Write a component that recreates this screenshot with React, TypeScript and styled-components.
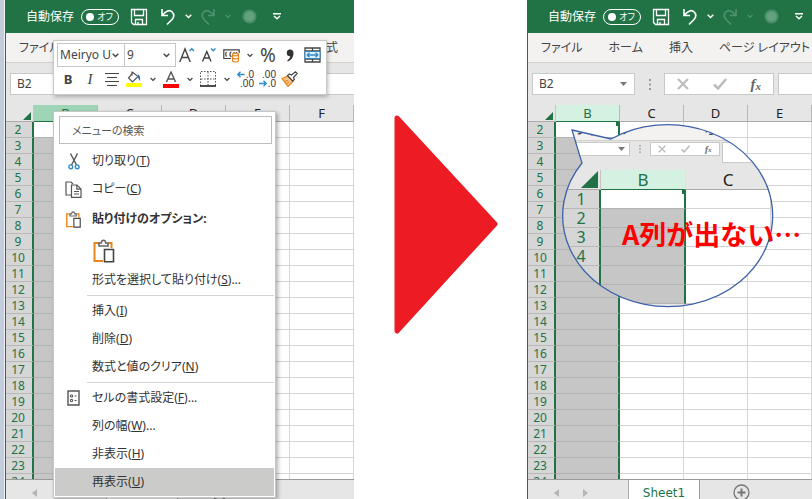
import React from "react";
import styled, { createGlobalStyle, css } from "styled-components";

const GREEN = "#217346";

const GlobalStyle = createGlobalStyle`
  *, *::before, *::after { box-sizing: border-box; }
  html, body { margin: 0; background: #fff; }
  body, button, input, select {
    font-family: "Noto Sans", "Noto Sans CJK JP", sans-serif;
    font-feature-settings: "palt";
    color: #444;
  }
  button { margin: 0; padding: 0; border: 0; background: none; }
`;

/* ---------- page ---------- */

const Page = styled.main`
  display: grid;
  grid-template-columns: 5px minmax(0, 349fr) minmax(0, 173fr) minmax(0, 285fr);
  height: 100vh;
  overflow: hidden;
`;

const Edge = styled.div`
  background: #c3ccda;
  border-right: 1px solid #eef1f5;
`;

const Middle = styled.div`
  display: flex;
  justify-content: center;
  align-items: flex-start;
  padding: 114px 0 0 10px;
`;

const Pane = styled.section`
  position: relative;
  min-width: 0;
  height: 100vh;
`;

const Window = styled.div`
  display: flex;
  flex-direction: column;
  height: 100%;
  overflow: hidden;
  background: #e6e6e6;
  border-left: 1px solid ${GREEN};
`;

/* ---------- title bar ---------- */

const TitleBar = styled.header`
  flex: none;
  display: flex;
  align-items: center;
  height: 33px;
  padding-left: 20px;
  background: ${GREEN};
  overflow: hidden;
`;

const ToggleLabel = styled.label`
  display: flex;
  flex: none;
  align-items: center;
  gap: 7px;
  color: #fff;
  font-size: 12px;
  line-height: 16px;
  white-space: nowrap;
`;

const Toggle = styled.span`
  display: flex;
  align-items: center;
  justify-content: space-between;
  width: 38px;
  height: 16px;
  padding: 0 5px 0 4px;
  border: 1px solid #fff;
  border-radius: 8px;
  font-size: 9px;
`;

const ToggleInput = styled.input`
  appearance: none;
  width: 8px;
  height: 8px;
  margin: 0;
  border-radius: 50%;
  background: #fff;
`;

const TitleTools = styled.div`
  display: flex;
  flex: none;
  align-items: center;
  margin-left: 5px;
`;

const TitleButton = styled.button<{ $w: number; $dim?: boolean }>`
  display: flex;
  flex: none;
  align-items: center;
  justify-content: center;
  width: ${(p) => p.$w}px;
  height: 24px;
  color: ${(p) => (p.$dim ? "#4f9270" : "#fff")};
`;

/* ---------- ribbon ---------- */

const Ribbon = styled.nav`
  flex: none;
  display: flex;
  align-items: center;
  gap: 26px;
  height: 30px;
  padding-left: 13px;
  background: #f3f2f1;
  border-bottom: 1px solid #d2d0ce;
  overflow: hidden;
`;

const RibbonTab = styled.button`
  flex: none;
  font-size: 12px;
  line-height: 20px;
  white-space: nowrap;
`;

/* ---------- formula bar ---------- */

const FormulaBar = styled.div<{ $small?: boolean }>`
  flex: none;
  display: flex;
  align-items: ${(p) => (p.$small ? "flex-start" : "center")};
  height: ${(p) => (p.$small ? 28 : 42)}px;
  padding-left: ${(p) => (p.$small ? 0 : 4)}px;
  overflow: hidden;
`;

const NameBox = styled.div<{ $small?: boolean }>`
  flex: none;
  display: flex;
  align-items: center;
  justify-content: space-between;
  width: ${(p) => (p.$small ? 67 : 103)}px;
  height: ${(p) => (p.$small ? 14 : 22)}px;
  padding: 0 ${(p) => (p.$small ? 4 : 7)}px 0 6px;
  background: #fff;
  border: 1px solid #c9c9c9;
`;

const NameInput = styled.input`
  width: 60px;
  padding: 0;
  border: 0;
  outline: 0;
  background: transparent;
  font-size: 12px;
  line-height: 16px;
`;

const Dots = styled.div<{ $small?: boolean }>`
  flex: none;
  display: flex;
  justify-content: center;
  align-items: center;
  width: ${(p) => (p.$small ? 20 : 29)}px;
  height: ${(p) => (p.$small ? 14 : 22)}px;
`;

const FxBox = styled.div<{ $small?: boolean }>`
  flex: none;
  display: flex;
  align-items: center;
  justify-content: space-around;
  width: ${(p) => (p.$small ? 70 : 110)}px;
  height: ${(p) => (p.$small ? 14 : 22)}px;
  margin-right: ${(p) => (p.$small ? 2 : 4)}px;
  background: #fff;
  border: 1px solid #c9c9c9;
`;

const FxButton = styled.button<{ $small?: boolean }>`
  display: flex;
  align-items: center;
  color: #666;
  font: italic bold ${(p) => (p.$small ? 9 : 15)}px "Liberation Serif", serif;
  sub {
    font-size: ${(p) => (p.$small ? 7 : 11)}px;
    line-height: 9px;
    padding-top: ${(p) => (p.$small ? 2 : 4)}px;
  }
`;

const FormulaInput = styled.input<{ $small?: boolean }>`
  flex: 1;
  min-width: 0;
  height: ${(p) => (p.$small ? 21 : 22)}px;
  padding: 0;
  background: #fff;
  border: 1px solid #c9c9c9;
  border-right: 0;
`;

/* ---------- sheet ---------- */

const SheetArea = styled.div`
  flex: 1;
  min-height: 0;
  overflow: hidden;
  background: #fff;
`;

const SheetTable = styled.table`
  table-layout: fixed;
  width: 0;
  border-collapse: separate;
  border-spacing: 0;
`;

type Size = { $big?: boolean };

const Corner = styled.th<Size>`
  width: ${(p) => (p.$big ? 38 : 28)}px;
  height: ${(p) => (p.$big ? 20 : 17)}px;
  padding: 0 2px 1px 0;
  background: #e6e6e6;
  border-right: 1px solid #c4c4c4;
  border-bottom: 1px solid #ababab;
  text-align: right;
  vertical-align: bottom;
  line-height: 0;
`;

const ColHead = styled.th<Size & { $sel?: string }>`
  width: ${(p) => (p.$big ? 85 : 64)}px;
  height: ${(p) => (p.$big ? 20 : 17)}px;
  padding: 0;
  background: ${(p) => p.$sel ?? "#e6e6e6"};
  border-right: 1px solid ${(p) => (p.$big ? "#e0e0e0" : "#b8b8b8")};
  border-bottom: 1px solid ${(p) => (p.$sel ? GREEN : "#ababab")};
  color: ${(p) => (p.$sel ? GREEN : "#222")};
  font-size: ${(p) => (p.$big ? 17 : 13)}px;
  font-weight: 400;
  line-height: ${(p) => (p.$big ? 19 : 16)}px;
`;

const RowHead = styled.th<Size>`
  height: ${(p) => (p.$big ? 19 : 16)}px;
  padding: 0 ${(p) => (p.$big ? 0 : 2)}px 0 0;
  background: #d6d6d6;
  border-right: 2px solid ${GREEN};
  border-bottom: 1px solid #b9b9b9;
  color: ${GREEN};
  font-size: ${(p) => (p.$big ? 16 : 12)}px;
  font-weight: 400;
  line-height: ${(p) => (p.$big ? 18 : 15)}px;
`;

const Cell = styled.td<{ $kind?: "active" | "selected" }>`
  position: relative;
  padding: 0;
  background: #fff;
  border-right: 1px solid #d8d8d8;
  border-bottom: 1px solid #d4d4d4;
  ${(p) =>
    p.$kind &&
    css`
      background: ${p.$kind === "active" ? "#fff" : "#c6c6c6"};
      border-right: 2px solid ${GREEN};
      border-bottom-color: #b2b2b2;
    `}
`;

const Handle = styled.span`
  position: absolute;
  top: 0;
  right: -3px;
  width: 5px;
  height: 4px;
  background: ${GREEN};
`;

/* ---------- sheet tabs ---------- */

const SheetBar = styled.footer`
  flex: none;
  display: flex;
  height: 20px;
  background: #e6e6e6;
  border-top: 1px solid #9b9b9b;
  overflow: hidden;
`;

const SheetNav = styled.div`
  flex: none;
  display: flex;
  align-items: center;
  gap: 24px;
  width: 101px;
  padding: 6px 0 0 26px;
  border-right: 1px solid #ababab;
`;

const NavButton = styled.button`
  display: flex;
`;

const SheetTab = styled.button`
  flex: none;
  width: 71px;
  margin-top: -1px;
  padding-top: 6px;
  background: #fff;
  border-right: 1px solid #9b9b9b;
  color: ${GREEN};
  font: 12px/16px "DejaVu Sans", sans-serif;
`;

const AddSheet = styled.button`
  flex: none;
  display: flex;
  align-items: flex-start;
  padding: 4px 0 0 33px;
`;

/* ---------- floating format toolbar ---------- */

const MiniToolbar = styled.div`
  position: absolute;
  left: 48px;
  top: 40px;
  padding: 2px 3px 3px;
  background: #fff;
  border: 1px solid #c8c8c8;
  box-shadow: 1px 2px 4px rgba(0, 0, 0, 0.25);
`;

const ToolRow = styled.div`
  display: flex;
  align-items: center;
  height: 24px;
`;

const Picker = styled.span<{ $w: number }>`
  display: grid;
  grid-template-columns: 1fr 12px;
  align-items: center;
  width: ${(p) => p.$w}px;
  height: 24px;
  border: 1px solid #c6c6c6;
  & + & { border-left: 0; }
  svg { grid-area: 1 / 2; pointer-events: none; }
`;

const PickerSelect = styled.select`
  grid-area: 1 / 1;
  appearance: none;
  min-width: 0;
  width: 100%;
  padding: 0 0 0 2px;
  border: 0;
  background: transparent;
  font-size: 12px;
  line-height: 20px;
  overflow: hidden;
`;

const Tool = styled.button<{ $narrow?: boolean }>`
  display: flex;
  align-items: center;
  justify-content: center;
  width: ${(p) => (p.$narrow ? 15 : 22)}px;
  height: 24px;
`;

const Glyph = styled.span<{ $size: number; $bold?: boolean; $italic?: boolean }>`
  font-size: ${(p) => p.$size}px;
  line-height: 22px;
  font-weight: ${(p) => (p.$bold ? 700 : 400)};
  ${(p) => p.$italic && 'font-style: italic; font-family: "Liberation Serif", serif;'}
`;

/* ---------- context menu ---------- */

const Menu = styled.div`
  position: absolute;
  left: 48px;
  top: 111px;
  width: 223px;
  padding: 4px 1px 1px;
  background: #fff;
  border: 1px solid #c6c6c6;
  box-shadow: 2px 2px 4px rgba(0, 0, 0, 0.3);
`;

const MenuSearch = styled.input`
  display: block;
  width: 213px;
  height: 28px;
  margin: 0 4px 3px;
  padding: 0 12px;
  border: 1px solid #bdbdbd;
  border-radius: 0;
  font-size: 11px;
  &::placeholder { color: #555; opacity: 1; }
`;

const MenuItem = styled.button<{ $active?: boolean; $heading?: boolean }>`
  display: grid;
  grid-template-columns: 37px 1fr;
  align-items: center;
  width: 100%;
  height: ${(p) => (p.$heading ? 32 : 28)}px;
  background: ${(p) => (p.$active ? "#cbcbca" : "transparent")};
  color: #333;
  font-size: 12px;
  font-weight: ${(p) => (p.$heading ? 700 : 400)};
  line-height: 18px;
  text-align: left;
  white-space: nowrap;
`;

const MenuIcon = styled.span`
  display: flex;
  justify-content: center;
`;

const PasteOption = styled.button`
  display: flex;
  align-items: center;
  height: 31px;
  padding-left: 37px;
`;

const Separator = styled.hr`
  height: 1px;
  margin: 1px 0 1px 32px;
  border: 0;
  background: #d5d5d5;
`;

/* ---------- callout ---------- */

const Callout = styled.div`
  position: absolute;
  left: 36px;
  top: 124px;
  width: 211px;
  height: 183px;
`;

const OUTLINE = "M9 6 L48 15 A105 91 0 1 1 19 39 Z";

const Lens = styled.div`
  height: 100%;
  background: #e6e6e6;
  clip-path: path("${OUTLINE}");
`;

const LensRibbon = styled.div`
  display: flex;
  gap: 74px;
  height: 17px;
  padding-left: 12px;
  margin-bottom: 1px;
  overflow: hidden;
  background: #f3f2f1;
  border-bottom: 1px solid #d2d0ce;
  font-size: 16px;
  line-height: 8px;
  white-space: nowrap;
`;

const Outline = styled.svg`
  position: absolute;
  inset: 0;
  overflow: visible;
`;

const Note = styled.p`
  position: absolute;
  left: 95px;
  top: 216px;
  margin: 0;
  color: #f00;
  font: 700 27px/36px "Noto Sans CJK JP", sans-serif;
  font-feature-settings: normal;
  white-space: nowrap;
`;

/* ---------- icons ---------- */

const Chevron = ({ w = 7 }: { w?: number }) => (
  <svg width={w} height="5" viewBox="0 0 7 5" fill="none" stroke="currentColor" strokeWidth="1.5">
    <path d="M0.7 0.8 3.5 3.5 6.3 0.8" />
  </svg>
);

const Caret = () => (
  <svg width="7" height="4" viewBox="0 0 7 4"><path d="M0 0h7L3.5 4z" fill="#777" /></svg>
);

const SaveIcon = () => (
  <svg width="18" height="18" viewBox="0 0 18 18" fill="none" stroke="currentColor" strokeWidth="1.3">
    <path d="M1.5 1.5h15v15H3.5l-2-2zM4.5 1.5v6h9v-6M5.5 16.5v-5h7v5M8 16.5v-2.5" />
  </svg>
);

const UndoIcon = ({ flip }: { flip?: boolean }) => (
  <svg width="16" height="18" viewBox="0 0 16 18" fill="none" stroke="currentColor" strokeWidth="1.6">
    <path d={flip ? "M14 1v6.500H8M14 7.500C10 2.500 6.500 1.500 3.800 4C1.500 6.500 1.800 9 4 11.500L9 16.500" : "M2 1v6.500h6M2 7.500C6 2.500 9.500 1.500 12.200 4C14.500 6.500 14.200 9 12 11.500L7 16.500"} />
  </svg>
);

const Triangle = ({ size }: { size: number }) => (
  <svg width={size} height={size} viewBox="0 0 10 10"><path d="M10 0v10H0z" fill={GREEN} /></svg>
);

const Clipboard = ({ size }: { size: number }) => (
  <svg width={size} height={size} viewBox="0 0 22 24" fill="none" strokeWidth="1.6">
    <path d="M6 4H1.500v18H10M15 4h3.500v5" stroke="#e8861c" strokeWidth="2" />
    <path d="M6 7V4h2.200c.3-2 1-2.800 2.300-2.800s2 .8 2.300 2.800H15v3z" stroke="#666" fill="#fff" />
    <path d="M11.500 10.500h9v12.300h-9z" stroke="#444" fill="#fff" />
  </svg>
);

const CutIcon = () => (
  <svg width="12" height="17" viewBox="0 0 12 17" fill="none" strokeWidth="1.4">
    <path d="M2.500 0.500 8.500 12M9.500 0.500 3.500 12" stroke="#555" />
    <circle cx="2.800" cy="13.800" r="1.900" stroke="#2e8bd0" />
    <circle cx="9.200" cy="13.800" r="1.900" stroke="#2e8bd0" />
  </svg>
);

const CopyIcon = () => (
  <svg width="17" height="17" viewBox="0 0 17 17" fill="none" stroke="#555" strokeWidth="1.200">
    <path d="M6 14H1V1h5l2 2" />
    <path d="M6.500 4h5.500l4 4v8.300H6.500z" fill="#fff" />
    <path d="M11.800 4v4.200H16M9 10.500h5M9 13h5" />
  </svg>
);

const FormatIcon = () => (
  <svg width="13" height="16" viewBox="0 0 13 16" fill="none" stroke="#555">
    <path d="M1 1h11v14H1z" strokeWidth="1.400" />
    <path d="M3.500 5h2v2h-2zM3.500 9.500h2v2h-2zM7.500 6h2M7.500 10.500h2" />
  </svg>
);

const AlignIcon = () => (
  <svg width="14" height="14" viewBox="0 0 14 14" stroke="#444" strokeWidth="1.200">
    <path d="M0 1.500h14M2 5.500h10M0 9.500h14M2 13.500h10" />
  </svg>
);

const FillIcon = () => (
  <svg width="16" height="16" viewBox="0 0 16 16" fill="none">
    <path d="M7 1.500 2.500 7l4 4 5.500-5.500zM6 0.500v4" stroke="#555" strokeWidth="1.200" />
    <path d="M11.500 3.500c2.500 0 3 3 2.500 6.500l-2-3z" fill="#2e75b6" />
    <path d="M0 12h16v4H0z" fill="#ffff00" />
  </svg>
);

const FontColorIcon = () => (
  <svg width="16" height="17" viewBox="0 0 16 17">
    <path d="M3.500 11 8 1l4.500 10M5 8h6" fill="none" stroke="#555" strokeWidth="1.400" />
    <path d="M0 13h16v4H0z" fill="#f00" />
  </svg>
);

const BorderIcon = () => (
  <svg width="16" height="16" viewBox="0 0 16 16" fill="none" stroke="#555">
    <path d="M0.500 15V0.500h15V15M8 1v14M1 8h14" strokeDasharray="1.500 1.500" />
    <path d="M0 15h16" stroke="#222" strokeWidth="1.600" />
  </svg>
);

const DecimalIcon = ({ less }: { less?: boolean }) => (
  <svg width="17" height="18" viewBox="0 0 17 18">
    <g fill="#333" fontFamily="Liberation Sans, sans-serif" fontSize="10" textAnchor="end">
      <text x="17" y="8">{less ? ".00" : ".0"}</text>
      <text x="17" y="17">{less ? ".0" : ".00"}</text>
    </g>
    <path
      d={less ? "M0 13.500h7M4.500 10.800 7.200 13.500 4.500 16.200" : "M7.500 4.500H.8M3.500 1.800.8 4.500 3.500 7.200"}
      fill="none" stroke="#2e8bd0" strokeWidth="1.400"
    />
  </svg>
);

const BrushIcon = () => (
  <svg width="17" height="16" viewBox="0 0 17 16">
    <path d="M1 7.500 7 5l5 5.500L7 15.500z" fill="#f6c28a" stroke="#e8861c" strokeWidth="1.200" />
    <path d="M3 10.500 7 9.500M5 13l3-2" stroke="#e8861c" />
    <path d="M6.500 4.500 8.500 3l2 1L14.500.8l1.700 1.700L12.500 6.500l.8 2-1.500 1.700z" fill="#fff" stroke="#444" strokeWidth="1.200" />
  </svg>
);

const MoneyIcon = () => (
  <svg width="17" height="15" viewBox="0 0 17 15" fill="none" stroke="#444" strokeWidth="1.200">
    <path d="M8 10.500H.8V1.800h15.400V5M3.500 4C2.500 5 2.500 7.500 3.500 8.500M8.500 4c-2 0-2 4.500 0 4.500M11 4v2M13.500 4v1" />
    <path d="M9.500 6.500v6c0 2 6 2 6 0v-6" fill="#fff" stroke="#e8861c" />
    <ellipse cx="12.500" cy="6.500" rx="3" ry="1.300" fill="#fff" stroke="#e8861c" />
    <path d="M9.500 9.500c0 1.700 6 1.700 6 0" stroke="#e8861c" />
  </svg>
);

const MergeIcon = () => (
  <svg width="17" height="16" viewBox="0 0 17 16" fill="none">
    <path d="M1 1h15v14H1zM1 4h15M1 12h15M8.500 1v3M8.500 12v3" stroke="#444" strokeWidth="1.300" />
    <path d="M1 4.500h15v7H1z" fill="#e3f1fb" stroke="#2e8bd0" />
    <path d="M3 8h11M5.500 5.800 3.200 8l2.300 2.200M11.500 5.800 13.800 8l-2.300 2.200" stroke="#2e8bd0" strokeWidth="1.300" />
  </svg>
);

const FontStep = ({ down }: { down?: boolean }) => (
  <svg width="16" height="17" viewBox="0 0 16 17" fill="none">
    <path
      d={down ? "M1.500 14.500 5.800 4.500 10 14.500M3 11h5.700" : "M.8 15 6 2l5.200 13M2.700 10.500h6.600"}
      stroke="#444" strokeWidth="1.400"
    />
    <path d={down ? "M10 1.500 12.200 3.800 14.500 1.500" : "M10.500 4 12.800 1.700 15 4"} stroke="#2e8bd0" strokeWidth="1.400" />
  </svg>
);

/* ---------- composed parts ---------- */

const ExcelTitle = () => (
  <TitleBar>
    <ToggleLabel>
      自動保存
      <Toggle>
        <ToggleInput type="checkbox" role="switch" />
        オフ
      </Toggle>
    </ToggleLabel>
    <TitleTools>
      <TitleButton $w={30} aria-label="上書き保存"><SaveIcon /></TitleButton>
      <TitleButton $w={28} aria-label="元に戻す"><UndoIcon /></TitleButton>
      <TitleButton $w={12} aria-label="元に戻す一覧"><Chevron /></TitleButton>
      <TitleButton $w={28} $dim aria-label="やり直し"><UndoIcon flip /></TitleButton>
      <TitleButton $w={12} $dim aria-label="やり直し一覧"><Chevron w={6} /></TitleButton>
      <TitleButton $w={30} $dim aria-label="記録">
        <svg width="15" height="15" viewBox="0 0 15 15">
          <circle cx="7.500" cy="7.500" r="7" fill="#4a8f69" />
          <circle cx="7.500" cy="7.500" r="5" fill="#62a07e" />
        </svg>
      </TitleButton>
      <TitleButton $w={26} aria-label="カスタマイズ">
        <svg width="8" height="7" viewBox="0 0 8 7" fill="none" stroke="currentColor" strokeWidth="1.400">
          <path d="M0 .8h8M1 3l3 2.800L7 3" />
        </svg>
      </TitleButton>
    </TitleTools>
  </TitleBar>
);

const TABS = ["ファイル", "ホーム", "挿入", "ページ レイアウト", "数式"];

const FormulaRow = ({ small }: { small?: boolean }) => (
  <FormulaBar $small={small}>
    <NameBox $small={small}>
      {small ? <span /> : <NameInput aria-label="名前ボックス" defaultValue="B2" />}
      <Caret />
    </NameBox>
    <Dots $small={small}>
      <svg width="2" height={small ? 8 : 11} viewBox="0 0 2 11" fill="#999">
        <path d="M0 0h2v2H0zM0 4.500h2v2H0zM0 9h2v2H0z" />
      </svg>
    </Dots>
    <FxBox $small={small}>
      <FxButton aria-label="キャンセル">
        <svg width={small ? 8 : 12} height={small ? 8 : 12} viewBox="0 0 12 12" stroke="#bbb" strokeWidth="2"><path d="M1 1l10 10M11 1 1 11" /></svg>
      </FxButton>
      <FxButton aria-label="入力">
        <svg width={small ? 9 : 14} height={small ? 8 : 12} viewBox="0 0 14 12" fill="none" stroke="#bbb" strokeWidth="2.500"><path d="M1 6.500 5 10.500 13 1" /></svg>
      </FxButton>
      <FxButton $small={small} aria-label="関数の挿入">f<sub>x</sub></FxButton>
    </FxBox>
    <FormulaInput $small={small} aria-label="数式バー" />
  </FormulaBar>
);

type SheetProps = { columns: string[]; rows: number[]; tint: string; big?: boolean };

const Sheet = ({ columns, rows, tint, big }: SheetProps) => (
  <SheetTable>
    <thead>
      <tr>
        <Corner $big={big}><Triangle size={big ? 17 : 8} /></Corner>
        {columns.map((c, i) => (
          <ColHead key={c} $big={big} $sel={i === 0 ? tint : undefined} scope="col">{c}</ColHead>
        ))}
      </tr>
    </thead>
    <tbody>
      {rows.map((r, ri) => (
        <tr key={r}>
          <RowHead $big={big} scope="row">{r}</RowHead>
          {columns.map((c, ci) => (
            <Cell key={c} $kind={ci ? undefined : ri ? "selected" : "active"}>
              {!ci && !ri && <Handle />}
            </Cell>
          ))}
        </tr>
      ))}
    </tbody>
  </SheetTable>
);

const ROWS = Array.from({ length: 23 }, (_, i) => i + 2);

const ExcelWindow = ({ columns, tint }: { columns: string[]; tint: string }) => (
  <Window>
    <ExcelTitle />
    <Ribbon>{TABS.map((t) => <RibbonTab key={t}>{t}</RibbonTab>)}</Ribbon>
    <FormulaRow />
    <SheetArea><Sheet columns={columns} rows={ROWS} tint={tint} /></SheetArea>
    <SheetBar>
      <SheetNav>
        <NavButton aria-label="前のシート"><svg width="5" height="8" viewBox="0 0 5 8"><path d="M5 0v8L0 4z" fill="#b5b5b5" /></svg></NavButton>
        <NavButton aria-label="次のシート"><svg width="5" height="8" viewBox="0 0 5 8"><path d="M0 0v8l5-4z" fill="#b5b5b5" /></svg></NavButton>
      </SheetNav>
      <SheetTab>Sheet1</SheetTab>
      <AddSheet aria-label="新しいシート">
        <svg width="17" height="17" viewBox="0 0 17 17" fill="none" stroke="#777">
          <circle cx="8.500" cy="8.500" r="7.500" strokeWidth="1.300" />
          <path d="M8.500 4.500v8M4.500 8.500h8" strokeWidth="2" />
        </svg>
      </AddSheet>
    </SheetBar>
  </Window>
);

const More = ({ label }: { label: string }) => (
  <Tool $narrow aria-label={label}><Chevron w={6} /></Tool>
);

const FormatToolbar = () => (
  <MiniToolbar role="toolbar" aria-label="書式">
    <ToolRow>
      <Picker $w={68}>
        <PickerSelect aria-label="フォント"><option>Meiryo UI</option></PickerSelect>
        <Chevron />
      </Picker>
      <Picker $w={51}>
        <PickerSelect aria-label="フォント サイズ"><option>9</option></PickerSelect>
        <Chevron />
      </Picker>
      <Tool aria-label="拡大"><FontStep /></Tool>
      <Tool aria-label="縮小"><FontStep down /></Tool>
      <Tool aria-label="通貨"><MoneyIcon /></Tool>
      <More label="通貨一覧" />
      <Tool><Glyph $size={19}>%</Glyph></Tool>
      <Tool aria-label="桁区切り">
        <svg width="8" height="13" viewBox="0 0 8 13"><path d="M4 .5a3.300 3.300 0 0 1 3.500 3.700c0 4-2.500 7-5.700 8.300L1.200 11.500C3 10.300 4 9 4.200 7.200A3.300 3.300 0 0 1 4 .5z" fill="#333" /></svg>
      </Tool>
      <Tool aria-label="セルを結合"><MergeIcon /></Tool>
    </ToolRow>
    <ToolRow>
      <Tool><Glyph $size={13} $bold>B</Glyph></Tool>
      <Tool><Glyph $size={15} $italic>I</Glyph></Tool>
      <Tool aria-label="中央揃え"><AlignIcon /></Tool>
      <Tool aria-label="塗りつぶし"><FillIcon /></Tool>
      <More label="塗りつぶし一覧" />
      <Tool aria-label="フォントの色"><FontColorIcon /></Tool>
      <More label="色一覧" />
      <Tool aria-label="罫線"><BorderIcon /></Tool>
      <More label="罫線一覧" />
      <Tool aria-label="小数点以下を増やす"><DecimalIcon /></Tool>
      <Tool aria-label="小数点以下を減らす"><DecimalIcon less /></Tool>
      <Tool aria-label="書式のコピー"><BrushIcon /></Tool>
    </ToolRow>
  </MiniToolbar>
);

type ItemProps = { text: string; keyChar?: string; tail?: string; icon?: React.ReactNode; active?: boolean; heading?: boolean };

const Item = ({ text, keyChar, tail, icon, active, heading }: ItemProps) => (
  <MenuItem role="menuitem" $active={active} $heading={heading}>
    <MenuIcon>{icon}</MenuIcon>
    <span>{text}{keyChar && <>(<u>{keyChar}</u>)</>}{tail}</span>
  </MenuItem>
);

const ContextMenu = () => (
  <Menu role="menu">
    <MenuSearch aria-label="メニューの検索" placeholder="メニューの検索" />
    <Item text="切り取り" keyChar="T" icon={<CutIcon />} />
    <Item text="コピー" keyChar="C" icon={<CopyIcon />} />
    <Item text="貼り付けのオプション:" heading icon={<Clipboard size={17} />} />
    <PasteOption aria-label="貼り付け"><Clipboard size={24} /></PasteOption>
    <Item text="形式を選択して貼り付け" keyChar="S" tail="..." />
    <Separator />
    <Item text="挿入" keyChar="I" />
    <Item text="削除" keyChar="D" />
    <Item text="数式と値のクリア" keyChar="N" />
    <Separator />
    <Item text="セルの書式設定" keyChar="F" tail="..." icon={<FormatIcon />} />
    <Item text="列の幅" keyChar="W" tail="..." />
    <Item text="非表示" keyChar="H" />
    <Item text="再表示" keyChar="U" active />
  </Menu>
);

export default function App() {
  return (
    <>
      <GlobalStyle />
      <Page>
        <Edge />
        <Pane>
          <ExcelWindow columns={["B", "C", "D", "E", "F"]} tint="#9fd5b7" />
          <FormatToolbar />
          <ContextMenu />
        </Pane>
        <Middle>
          <svg width="106" height="222" viewBox="0 0 106 222">
            <path d="M4 4 102 110 4 217z" fill="#ed1c24" stroke="#ed1c24" strokeWidth="5" strokeLinejoin="round" />
          </svg>
        </Middle>
        <Pane>
          <ExcelWindow columns={["B", "C", "D", "E"]} tint="#d5f1e2" />
          <Callout>
            <Lens>
              <LensRibbon><span>ファイル</span><span>ホーム</span></LensRibbon>
              <FormulaRow small />
              <Sheet big columns={["B", "C"]} rows={[1, 2, 3, 4, 5, 6]} tint="#d5f1e2" />
            </Lens>
            <Outline viewBox="0 0 211 183">
              <path d={OUTLINE} fill="none" stroke="#3d62a8" strokeWidth="1.300" />
            </Outline>
          </Callout>
          <Note>A列が出ない…</Note>
        </Pane>
      </Page>
    </>
  );
}
